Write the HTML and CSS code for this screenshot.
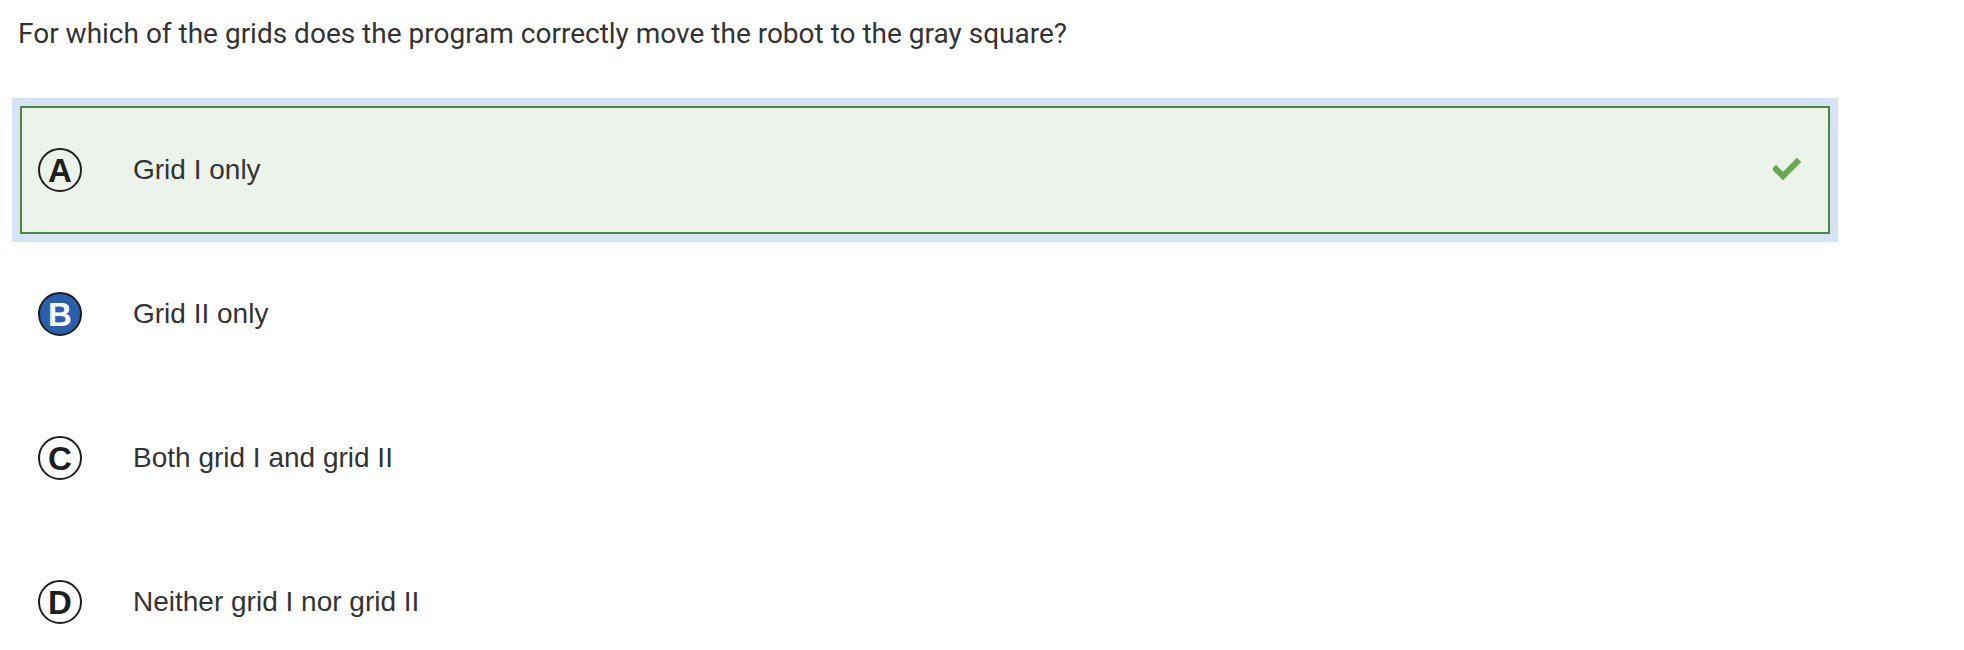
FILE: index.html
```html
<!DOCTYPE html>
<html lang="en">
<head>
<meta charset="utf-8">
<title>Question</title>
<link rel="stylesheet" href="styles.css">
</head>
<body>
  <p class="question">For which of the grids does the program correctly move the robot to the gray square?</p>
  <ul class="choices">
    <li class="choice is-correct">
      <div class="choice-inner">
        <span class="letter">A</span>
        <span class="label">Grid I only</span>
        <svg class="check" width="28" height="24" viewBox="0 0 28 24" aria-hidden="true">
          <polyline points="3,11 10,18 24,4" fill="none" stroke="#69a84f" stroke-width="6" stroke-linecap="square" stroke-linejoin="miter"/>
        </svg>
      </div>
    </li>
    <li class="choice">
      <div class="choice-inner">
        <span class="letter is-selected">B</span>
        <span class="label">Grid II only</span>
      </div>
    </li>
    <li class="choice">
      <div class="choice-inner">
        <span class="letter">C</span>
        <span class="label">Both grid I and grid II</span>
      </div>
    </li>
    <li class="choice">
      <div class="choice-inner">
        <span class="letter">D</span>
        <span class="label">Neither grid I nor grid II</span>
      </div>
    </li>
  </ul>
</body>
</html>
```

FILE: styles.css
```css
* {
  box-sizing: border-box;
}

html, body {
  margin: 0;
  padding: 0;
  background: #ffffff;
}

body {
  overflow: hidden;
}

.question {
  margin: 18px 0 48px 18px;
  font-family: Roboto, "Liberation Sans", sans-serif;
  font-size: 28px;
  line-height: 32px;
  color: #333333;
}

.choices {
  list-style: none;
  margin: 0 0 0 12px;
  padding: 0;
  width: 1826px;
}

.choice {
  padding: 8px;
}

.choice.is-correct {
  background: #d6e3f2;
}

.choice-inner {
  display: flex;
  align-items: center;
  height: 128px;
  padding: 0 27px 0 16px;
  border: 2px solid transparent;
}

.is-correct .choice-inner {
  border-color: #4b8741;
  background: #ecf3eb;
}

.letter {
  flex: 0 0 auto;
  width: 44px;
  height: 44px;
  border: 2px solid #1e1e1e;
  border-radius: 50%;
  display: flex;
  align-items: center;
  justify-content: center;
  font-family: "Liberation Sans", Arial, sans-serif;
  font-weight: bold;
  font-size: 33px;
  line-height: 1;
  color: #1e1e1e;
}

.letter.is-selected {
  background: #2a5fae;
  color: #ffffff;
}

.label {
  margin-left: 51px;
  font-family: "Liberation Sans", Arial, sans-serif;
  font-size: 28px;
  color: #333333;
}

.check {
  margin-left: auto;
  display: block;
}
```
